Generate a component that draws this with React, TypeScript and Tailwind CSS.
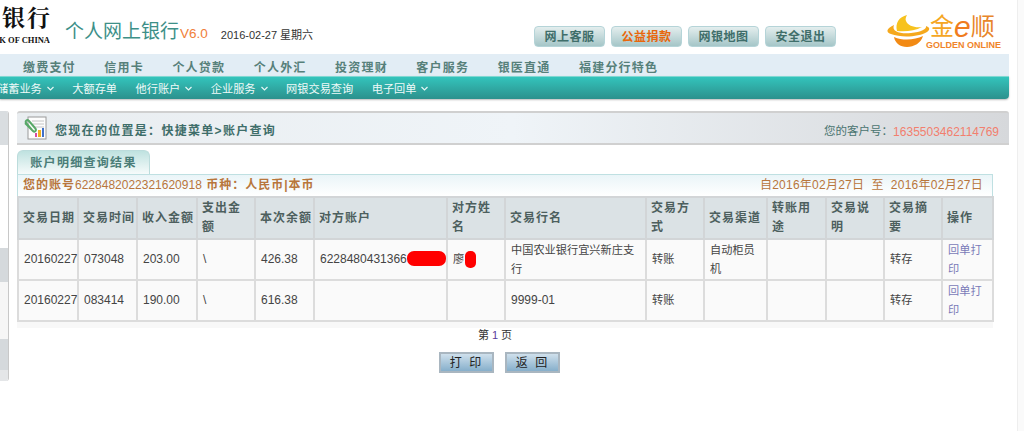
import React from 'react';

const FONT_CJK = "font-['Liberation_Sans','Noto_Sans_CJK_SC',sans-serif]";
const FONT_SERIF = "font-['Liberation_Serif','Noto_Serif_CJK_SC','Noto_Sans_CJK_SC',serif]";

const columns = [60, 59, 60, 58, 59, 133, 58, 141, 58, 63, 59, 58, 58, 51];

const headers = [
  '交易日期', '交易时间', '收入金额', '支出金\n额', '本次余额', '对方账户', '对方姓\n名',
  '交易行名', '交易方\n式', '交易渠道', '转账用\n途', '交易说\n明', '交易摘\n要', '操作',
];

const rows = [
  ['20160227', '073048', '203.00', '\\', '426.38', '6228480431366', '廖', '中国农业银行宜兴新庄支\n行', '转账', '自动柜员\n机', '', '', '转存', '回单打\n印'],
  ['20160227', '083414', '190.00', '\\', '616.38', '', '', '9999-01', '转账', '', '', '', '转存', '回单打\n印'],
];

const topButtons = ['网上客服', '公益捐款', '网银地图', '安全退出'];
const navItems = ['缴费支付', '信用卡', '个人贷款', '个人外汇', '投资理财', '客户服务', '银医直通', '福建分行特色'];
const subNav = [
  { label: '储蓄业务', arrow: true },
  { label: '大额存单', arrow: false },
  { label: '他行账户', arrow: true },
  { label: '企业服务', arrow: true },
  { label: '网银交易查询', arrow: false },
  { label: '电子回单', arrow: true },
];

const Chevron = () => (
  <svg width="7" height="5" viewBox="0 0 7 5" className="ml-[5px]">
    <path d="M0.5 1 L3.5 4 L6.5 1" fill="none" stroke="#e6f7f5" strokeWidth="1.2" />
  </svg>
);

const GoldBowl = () => (
  <svg width="46" height="34" viewBox="0 0 46 34" className="shrink-0">
    <path d="M22 1 C14 3 10 9 12 17 C20 18 30 17 37 13 C30 14 23 12 21 7 C20 5 21 3 22 1 Z" fill="#f7c21e" />
    <path d="M9 11 C2 14 0 18 6 20 C16 24 34 23 42 18 C46 15 44 13 41 12 C42 15 36 18 26 19 C16 20 6 18 9 11 Z" fill="#f5a81c" />
    <path d="M9 23 C18 27 30 26 38 22 C36 29 29 33 22 33 C15 33 10 29 9 23 Z" fill="#f28a14" />
  </svg>
);

const DocIcon = () => (
  <svg width="24" height="24" viewBox="0 0 24 24" className="shrink-0">
    <rect x="4" y="1" width="18" height="22" fill="#fdfdfd" stroke="#9a9a9a" strokeWidth="1" />
    <path d="M8 5 H20 M9 8 H20 M11 11 H20" stroke="#c4c4c4" strokeWidth="1" />
    <rect x="11" y="17" width="2" height="4" fill="#d84aa0" />
    <rect x="14" y="14" width="3" height="7" fill="#f0b020" />
    <rect x="18" y="12" width="2" height="9" fill="#3f6fc8" />
    <path d="M1 7 L9 15 C11 17 13 14 11 12 L5 5 C3 3 1 5 2 7 L8 14" fill="none" stroke="#58a868" strokeWidth="2" />
  </svg>
);

export default function App() {
  return (
    <div className={`h-[431px] w-[1024px] overflow-hidden bg-white flex ${FONT_CJK}`}>
      <div className="w-[1017px] shrink-0">
        {/* header */}
        <div className="h-[54px] flex">
          <div className="w-[50px] overflow-hidden flex flex-col items-end pt-[6px]">
            <div className={`-mr-[2px] text-[23px] leading-[26px] font-bold text-[#111] tracking-[2px] whitespace-nowrap ${FONT_SERIF}`}>银行</div>
            <div className={`mt-[4px] text-[8.5px] leading-[9px] font-bold text-[#111] whitespace-nowrap ${FONT_SERIF}`}>BANK OF CHINA</div>
          </div>
          <div className="ml-[15px] pt-[20px] text-[19px] leading-[24px] text-[#3d9088] whitespace-nowrap">个人网上银行</div>
          <div className="ml-[1px] pt-[26px] text-[13.5px] leading-[16px] text-[#f0803a]">V6.0</div>
          <div className="ml-[13px] pt-[27px] text-[11px] leading-[16px] text-[#333] whitespace-nowrap">2016-02-27 星期六</div>
          <div className="ml-auto pt-[26px] flex gap-[6px]">
            {topButtons.map((b, i) => (
              <div
                key={b}
                className={`w-[71px] h-[21px] rounded-[4px] border border-[#b5d4d8] bg-gradient-to-b from-[#e4eeee] to-[#a5c6c8] flex items-center justify-center text-[12px] font-bold tracking-[0.5px] ${i === 1 ? 'text-[#e8670c]' : 'text-[#3f6e6a]'}`}
              >
                {b}
              </div>
            ))}
          </div>
          <div className="ml-[49px] pt-[14px] w-[132px] shrink-0 flex">
            <GoldBowl />
            <div className="flex flex-col">
              <div className="-ml-[1px] h-[26px] flex items-center text-[#f5a623] text-[24px] leading-[26px] whitespace-nowrap">
                <span>金</span>
                <span className="italic text-[30px] text-[#f07c1e]">e</span>
                <span className="text-[#e8862a]">顺</span>
              </div>
              <div className="-ml-[5px] text-[9px] leading-[10px] font-bold text-[#f0842a] whitespace-nowrap">GOLDEN ONLINE</div>
            </div>
          </div>
        </div>

        {/* nav */}
        <div className="w-[1009px] h-[22px] bg-[#e2edf5] flex items-center pt-[5px] pl-[23px] gap-[28.5px] text-[12px] font-bold tracking-[1.2px] text-[#56807a]">
          {navItems.map((n) => (
            <span key={n} className="whitespace-nowrap">{n}</span>
          ))}
        </div>
        <div className="w-[1009px] h-[23px] overflow-hidden rounded-br-[4px] border-t border-[#7fd8d2] bg-gradient-to-b from-[#33c4bc] to-[#2c918d] flex items-center pt-[2px] text-[11.2px] text-[#eefaf8] shadow-[0_1px_2px_#bbb]">
          <div className="flex gap-[18.5px] -ml-[3px]">
            {subNav.map((s) => (
              <span key={s.label} className="flex items-center whitespace-nowrap">
                {s.label}
                {s.arrow && <Chevron />}
              </span>
            ))}
          </div>
        </div>

        {/* body */}
        <div className="flex pt-[12px] gap-[8px]">
          <div className="w-[9px] h-[270px] flex flex-col overflow-hidden rounded-r-[3px] border-r border-[#c8c8c8]">
            <div className="h-[34px] bg-[#d9dde0]" />
            <div className="h-[103px] bg-white" />
            <div className="h-[34px] bg-[#d5d9dc]" />
            <div className="h-[57px] bg-[#f6f6f6]" />
            <div className="h-[31px] bg-[#d5d9dc]" />
            <div className="h-[11px] bg-[#e4e6e8]" />
          </div>

          <div className="w-[992px]">
            <div className="h-[34px] rounded-t-[3px] border-y-2 border-[#d0d0d0] bg-gradient-to-r from-[#e9edf0] via-[#eff4f8] to-[#d6d8db] flex items-center pl-[7px] pr-[10px]">
              <DocIcon />
              <span className="ml-[7px] mt-[6px] text-[12px] font-bold tracking-[1.3px] text-[#3f6e6a] whitespace-nowrap">您现在的位置是：快捷菜单&gt;账户查询</span>
              <span className="ml-auto mt-[7px] text-[11.5px] text-[#4a7470] whitespace-nowrap">您的客户号：</span>
              <span className="mt-[7px] text-[12px] text-[#f27f6e]">1635503462114769</span>
            </div>

            <div className="mt-[5px] w-[133px] h-[24px] rounded-t-[6px] border border-b-0 border-[#bcdcdc] bg-gradient-to-b from-[#bfe2e0] to-[#f6fbfb] flex items-center justify-center text-[12px] font-bold tracking-[1.3px] text-[#4a7d78]">
              账户明细查询结果
            </div>

            <div className="w-[976px]">
              <div className="h-[22px] pb-[2px] border-x border-t border-[#bfe0e2] bg-gradient-to-b from-[#eaf5f8] to-white flex items-center justify-between pl-[5px] pr-[9px] text-[12px] text-[#b8763c]">
                <span className="font-bold whitespace-nowrap tracking-[1px]">
                  您的账号<span className="font-normal tracking-normal">6228482022321620918</span> 币种：人民币|本币
                </span>
                <span className="whitespace-pre tracking-[0.25px]">自2016年02月27日  至  2016年02月27日</span>
              </div>

              <table className="w-[975px] table-fixed border-collapse">
                <colgroup>
                  {columns.map((w, i) => (
                    <col key={i} style={{ width: w }} />
                  ))}
                </colgroup>
                <thead>
                  <tr className="h-[42px] bg-[#dbe2e5]">
                    {headers.map((h) => (
                      <th
                        key={h}
                        className="border-2 border-[#d2d5d7] pl-[4px] text-left align-middle whitespace-pre-line text-[12px] leading-[19px] font-bold tracking-[1px] text-[#4d5f5e]"
                      >
                        {h}
                      </th>
                    ))}
                  </tr>
                </thead>
                <tbody>
                  {rows.map((row, r) => (
                    <tr key={r} className="h-[41px] bg-[#fafafa]">
                      {row.map((cell, c) => (
                        <td
                          key={c}
                          className={`relative border-2 border-[#dcdcdc] pl-[5px] align-middle whitespace-pre-line leading-[19px] ${/[\u4e00-\u9fa5]/.test(cell) ? 'text-[11.2px]' : 'text-[12px]'} ${c === 13 ? 'text-[#7a7ab8]' : 'text-[#444]'}`}
                        >
                          {cell}
                          {r === 0 && c === 5 && (
                            <div className="absolute right-0 top-[11px] w-[39px] h-[15px] rounded-[7px] bg-[#ff0000]" />
                          )}
                          {r === 0 && c === 6 && (
                            <div className="absolute left-[17px] top-[11px] w-[11px] h-[17px] rounded-[5px] bg-[#ff0000]" />
                          )}
                        </td>
                      ))}
                    </tr>
                  ))}
                </tbody>
              </table>
              <div className="h-[6px] bg-[#f8f8f8]" />

              <div className="pr-[20px] flex justify-center text-[11px] leading-[14px] text-[#333]">
                第 <span className="mx-[3px] text-[#5a3a9a]">1</span> 页
              </div>
              <div className="mt-[10px] pr-[11px] flex justify-center gap-[11px]">
                {['打 印', '返 回'].map((b) => (
                  <div
                    key={b}
                    className="w-[55px] h-[21px] border-2 border-[#a9b6c0] bg-gradient-to-b from-[#cfe0ec] to-[#86afcb] flex items-center justify-center text-[12px] tracking-[2px] text-[#222]"
                  >
                    {b}
                  </div>
                ))}
              </div>
            </div>
          </div>
        </div>
      </div>
      <div className="flex-1 bg-[#fafafa] border-l border-[#eeeeee]" />
    </div>
  );
}
